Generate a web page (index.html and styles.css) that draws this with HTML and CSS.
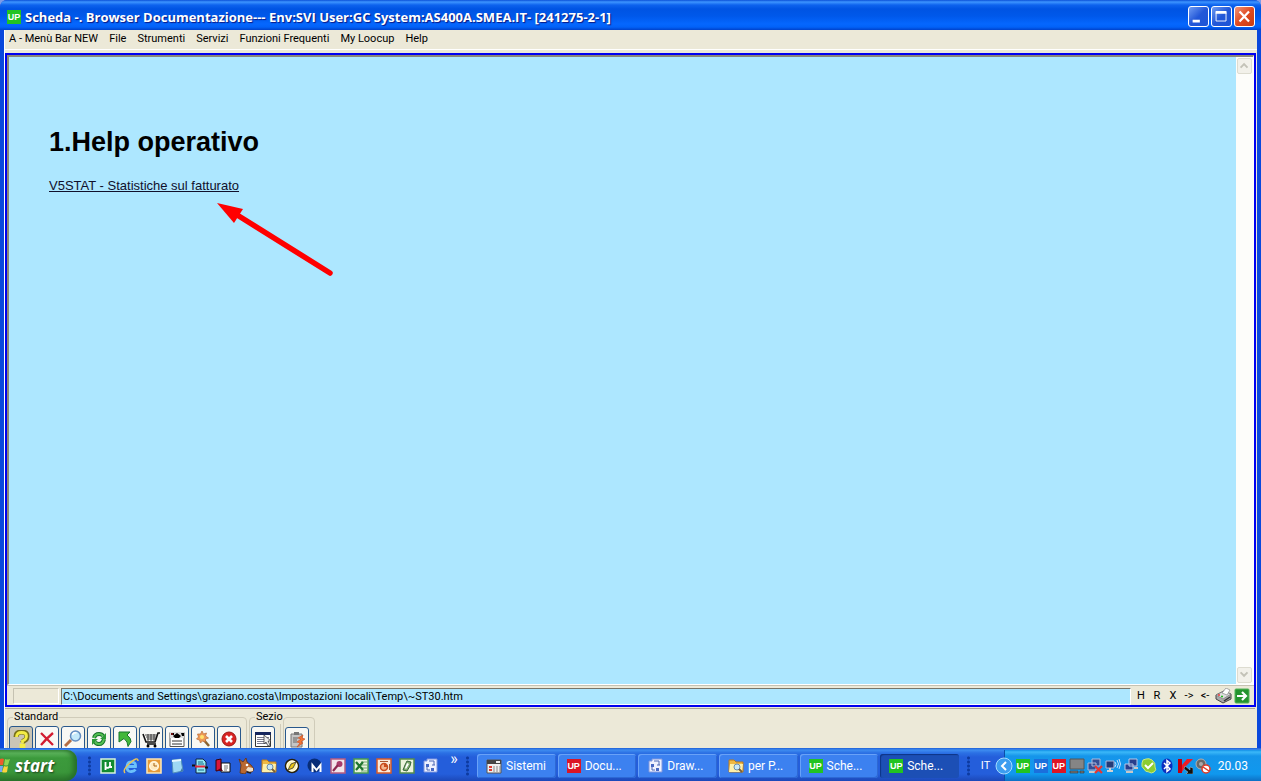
FILE: index.html
```html
<!DOCTYPE html>
<html lang="it">
<head>
<meta charset="utf-8">
<title>Scheda - Browser Documentazione</title>
<link rel="stylesheet" href="styles.css">
</head>
<body>
<div class="window">
  <header class="titlebar">
    <span class="up up-green">UP</span>
    <h1 class="title">Scheda -. Browser Documentazione--- Env:SVI User:GC System:AS400A.SMEA.IT- [241275-2-1]</h1>
    <button class="win-btn" aria-label="Riduci a icona"><svg viewBox="0 0 21 21"><path d="M4 14h8v3H4z" fill="#fff"/></svg></button>
    <button class="win-btn" aria-label="Ingrandisci"><svg viewBox="0 0 21 21"><path d="M4.500 6h11v9.500h-11z" fill="none" stroke="#fff"/><path d="M4 4.500h12v3H4z" fill="#fff"/></svg></button>
    <button class="win-btn win-close" aria-label="Chiudi"><svg viewBox="0 0 21 21"><path d="M5 5l10.500 11M15.500 5L5 16" stroke="#fff" stroke-width="2.500"/></svg></button>
  </header>
  <div class="frame">
    <nav class="menubar">
      <button>A - Menù Bar NEW</button><button>File</button><button>Strumenti</button><button>Servizi</button><button>Funzioni Frequenti</button><button>My Loocup</button><button>Help</button>
    </nav>
    <main class="panel">
      <div class="view">
        <article class="doc">
          <h2>1.Help operativo</h2>
          <a href="#v5stat">V5STAT - Statistiche sul fatturato</a>
          <svg class="arrow" viewBox="0 0 120 78"><path d="M18 12L114 72" stroke="#f00" stroke-width="5.500" stroke-linecap="round"/><path d="M1 2l26 6-9 14z" fill="#f00"/></svg>
        </article>
        <div class="scroll">
          <button class="scroll-btn" aria-label="Su"><svg viewBox="0 0 15 16"><path d="M3 10l4-4 4 4" fill="none" stroke="#c3c2b7" stroke-width="2.200"/></svg></button>
          <button class="scroll-btn" aria-label="Giù"><svg viewBox="0 0 15 16"><path d="M3 5l4 4 4-4" fill="none" stroke="#c3c2b7" stroke-width="2.200"/></svg></button>
        </div>
      </div>
      <div class="status">
        <span class="cell"></span>
        <input class="path" aria-label="Percorso" readonly value="C:\Documents and Settings\graziano.costa\Impostazioni locali\Temp\~ST30.htm">
        <div class="keys"><button>H</button><button>R</button><button>X</button><button>-&gt;</button><button>&lt;-</button></div>
        <button class="key-icon" aria-label="Stampa"><svg viewBox="0 0 17 16"><path d="M1 7l8-4 7 3v5l-8 4-7-4z" fill="#aaa" stroke="#444"/><path d="M1 7l7 4 8-5-7-3z" fill="#ddd" stroke="#777" stroke-width=".7"/><path d="M7 5l4-5 4 2-3 5z" fill="#fff" stroke="#888" stroke-width=".7"/><path d="M3 7h2" stroke="#e33" stroke-width="1.500"/><path d="M6 8.500h2" stroke="#2b2" stroke-width="1.500"/><path d="M9 13l6-4" stroke="#333" stroke-width="1.500"/></svg></button>
        <button class="key-icon" aria-label="Vai"><svg viewBox="0 0 16 16"><rect x="1" y="1" width="14" height="14" rx="1" fill="#24942e" stroke="#55b45a"/><path d="M3 8h8M8 4l4 4-4 4" fill="none" stroke="#fff" stroke-width="2.200"/></svg></button>
      </div>
    </main>
    <section class="toolbar">
      <fieldset class="group wide"><legend>Standard</legend>
        <button class="tool pressed" aria-label="Guida"><svg viewBox="0 0 18 18"><path d="M4 7q0-5 5.500-5t5.500 4-3.500 5l-1 2" fill="none" stroke="#77701a" stroke-width="5"/><path d="M4.500 7q0-4.500 5-4.500t5 3.500-4 5v2M9 15h3v3H9z" fill="none" stroke="#f3ec46" stroke-width="2.800"/></svg></button>
        <button class="tool" aria-label="Elimina"><svg viewBox="0 0 18 18"><path d="M3 3q5 5 12 12M15 3Q9 8 3 15" fill="none" stroke="#d21c30" stroke-width="2.300"/></svg></button>
        <button class="tool" aria-label="Cerca"><svg viewBox="0 0 18 18"><path d="M7 10l-6 6" stroke="#b36d43" stroke-width="3"/><circle cx="11.500" cy="6" r="5" fill="#c4e9fa" stroke="#638cc0" stroke-width="1.500"/><path d="M8.500 5q1-3 4-2" fill="none" stroke="#fff" stroke-width="1.500"/></svg></button>
        <button class="tool" aria-label="Aggiorna"><svg viewBox="0 0 18 18"><path d="M4 8q1-4 5-4 3 0 4 2M14 9q-1 5-5 5-3 0-4-2" fill="none" stroke="#17702b" stroke-width="4"/><path d="M4 8q1-4 5-4 3 0 4 2M14 9q-1 5-5 5-3 0-4-2" fill="none" stroke="#56c252" stroke-width="2"/><path d="M16 3v6h-6zM2 15V9h6z" fill="#2c9b37"/></svg></button>
        <button class="tool" aria-label="Indietro"><svg viewBox="0 0 18 18"><path d="M3 2h11l-3 3q4 3 4 6.500l-3 5q0-5-4-8L3 12z" fill="#42b83a" stroke="#17762c"/></svg></button>
        <button class="tool" aria-label="Carrello"><svg viewBox="0 0 18 18"><path d="M1 4l3 8h9l3-9h2M5 14h9" fill="none" stroke="#111" stroke-width="1.600"/><path d="M3 5h12M4 7h10M5 9h9M6 4v7M9 4v7M12 4v7" stroke="#222" stroke-width=".8"/><circle cx="6" cy="16" r="1.500"/><circle cx="13" cy="16" r="1.500"/></svg></button>
        <button class="tool" aria-label="Scheda"><svg viewBox="0 0 18 18"><path d="M2 2.500h14v14H2z" fill="#fff" stroke="#555"/><path d="M2 2h14v6H2z" fill="#ddd"/><path d="M9 3l4 3-2 2H7L5 6zM3 3h3v2H3zM13 3h3v3h-2z" fill="#000"/><path d="M4 11h10M4 14h10" stroke="#333"/><path d="M3 4h2" stroke="#d22"/></svg></button>
        <button class="tool" aria-label="Configura"><svg viewBox="0 0 18 18"><path d="M9 9l6 7" stroke="#8b6330" stroke-width="2.500"/><path d="M8 1l1.500 3 3-1-1 3 3 2-3 1 0 3-3-1-2 2-1-3-3-1 2-2-1-3 3 0z" fill="#ee9a56" stroke="#b96a35" stroke-width=".7"/><circle cx="8" cy="7" r="2" fill="#ffe36c"/></svg></button>
        <button class="tool" aria-label="Esci"><svg viewBox="0 0 18 18"><circle cx="9" cy="9" r="7" fill="#d92320" stroke="#9c1714"/><path d="M6 6l6 6M12 6l-6 6" stroke="#fff" stroke-width="2.600"/></svg></button>
      </fieldset>
      <fieldset class="group"><legend>Sezio</legend>
        <button class="tool" aria-label="Seleziona"><svg viewBox="0 0 18 18"><path d="M1.500 2.500h15v14h-15z" fill="#fff" stroke="#333"/><path d="M1 2h16v3H1z" fill="#16265d"/><path d="M3 7.500h12M3 9.500h12M3 11.500h12M3 13.500h12" stroke="#7a7a8d"/><path d="M10 5v9l2-2 2 4 2-1-2-4h3z" fill="#eee" stroke="#444" stroke-width=".8"/></svg></button>
      </fieldset>
      <fieldset class="group" aria-label="Appunti">
        <button class="tool" aria-label="Incolla"><svg viewBox="0 0 18 18"><path d="M3 3h11v13H3z" fill="#c5c5c5" stroke="#777"/><path d="M6 1h5v3H6z" fill="#777"/><path d="M5 7h5M5 9h4M5 11h4" stroke="#666"/><path d="M15 4l-5 3 3 1-4 3 3 1-3 4 6-4-2-1 4-3-3-1z" fill="#f37534" stroke="#c84a20" stroke-width=".6"/></svg></button>
      </fieldset>
    </section>
  </div>
</div>
<footer class="taskbar">
  <button class="start"><svg viewBox="0 0 10 20"><path d="M0 3q2-1 4 0L3 9H0z" fill="#ef5a2d"/><path d="M5 3q2 1 5 0L8 9q-2 1-4 0z" fill="#92d552"/><path d="M0 10h3l-1 6H0z" fill="#72a7f5"/><path d="M4 10q2 1 4 0l-1 6q-2 1-5 0z" fill="#fbd33c"/></svg>start</button>
  <span class="grip"></span>
  <nav class="quick">
    <button aria-label="uTorrent"><svg viewBox="0 0 16 16"><path d="M1 1h14v14H1z" fill="#138b30" stroke="#d9f2dc" stroke-width="1.500"/><path d="M5.500 4v8M5.500 9q3 2 4.500-1V4v5h2" fill="none" stroke="#fff" stroke-width="1.800"/></svg></button>
    <button aria-label="Internet Explorer"><svg viewBox="0 0 16 16"><path d="M4 8.500h8.500Q13 4 8.500 4T4 9t4.500 4.500q2.500 0 4-2" fill="none" stroke="#6cc1fb" stroke-width="2.800"/><path d="M2 15Q-1 12 7 5t8-2" fill="none" stroke="#edc454" stroke-width="1.400"/></svg></button>
    <button aria-label="Outlook"><svg viewBox="0 0 16 16"><path d="M1 1h14v14H1z" fill="#e79a37" stroke="#fce4b2" stroke-width="1.600"/><circle cx="8" cy="8" r="4.300" fill="#ffe8bd" stroke="#fff4dc" stroke-width="1.500"/><path d="M8 5v3h3" fill="none" stroke="#a56315"/></svg></button>
    <button aria-label="Blocco note"><svg viewBox="0 0 16 16"><path d="M3 2l9-1 2 12-10 2z" fill="#9ed8f4" stroke="#5390bb"/><path d="M3 2l9-1v2L3 4z" fill="#e8f8ff"/><path d="M11 14l3-1-1-3z" fill="#3c77a6"/></svg></button>
    <button aria-label="Emulatore"><svg viewBox="0 0 16 16"><path d="M4 1h7l3 3v11H4z" fill="#94e9f4" stroke="#102543"/><path d="M6 4h5M6 6h6M6 12h6" stroke="#176b88"/><path d="M0 7.500h3M13 9.500h3" stroke="#111" stroke-width="2"/><path d="M3 8.500h10" stroke="#e4253a" stroke-width="2"/></svg></button>
    <button aria-label="Dizionario"><svg viewBox="0 0 16 16"><path d="M6 5h9v9H6z" fill="#fff" stroke="#111"/><path d="M1 2l5-1v11l-5 1z" fill="#d91639" stroke="#33030d"/><path d="M1 13h7l-2-3" fill="#5d0718"/><path d="M9 8h4M9 10h4M9 12h3" stroke="#777"/></svg></button>
    <button aria-label="eMule"><svg viewBox="0 0 16 16"><path d="M2 15l1-8-2-6 4 3 3-4 1 4 4 3 3 4-2 3-5-1-2 3z" fill="#b96831" stroke="#64310f" stroke-width=".8"/><path d="M10 9l5 1v3l-4 1-3-2z" fill="#efdfc9"/><circle cx="9" cy="7" r="1.300" fill="#fff"/><path d="M9 14l4 1" stroke="#222" stroke-width="1.500"/></svg></button>
    <button aria-label="Esplora"><svg viewBox="0 0 16 16"><path d="M1 2h5l2 2h7v10H1z" fill="#efb944" stroke="#ba7b1d"/><path d="M2 6h13l-1 8H1z" fill="#fff0a9"/><circle cx="9" cy="9" r="3" fill="#c9e9fa" stroke="#6b8dac"/><path d="M11 11l3 3" stroke="#7c6033" stroke-width="2"/></svg></button>
    <button aria-label="Bussola"><svg viewBox="0 0 16 16"><circle cx="8" cy="8" r="6.500" fill="#fff4ac" stroke="#27200d" stroke-width="1.500"/><circle cx="8" cy="8" r="5" fill="none" stroke="#fff"/><path d="M4 12l3-6 5-2-3 6z" fill="#e9c516" stroke="#333" stroke-width=".8"/></svg></button>
    <button aria-label="Media"><svg viewBox="0 0 16 16"><circle cx="7.500" cy="7.500" r="7" fill="#082d77"/><path d="M5.500 14V7l4 5 4-5v7" fill="none" stroke="#fff" stroke-width="2"/></svg></button>
    <button aria-label="Access"><svg viewBox="0 0 16 16"><path d="M1 1h14v14H1z" fill="#f3e4ea" stroke="#b85c80" stroke-width="1.500"/><circle cx="9.500" cy="6" r="3" fill="#a93c6b"/><path d="M8 7l-5 6" stroke="#8d2850" stroke-width="2.200"/></svg></button>
    <button aria-label="Excel"><svg viewBox="0 0 16 16"><path d="M1 1h14v14H1z" fill="#e8f4dc" stroke="#4b9b50" stroke-width="1.500"/><path d="M8 4h6M8 7h6M8 10h6M8 13h6" stroke="#77a879"/><path d="M3 4l7 8M10 4l-7 8" stroke="#217630" stroke-width="2.300"/></svg></button>
    <button aria-label="PowerPoint"><svg viewBox="0 0 16 16"><path d="M1 1h14v14H1z" fill="#faeadb" stroke="#d65b29" stroke-width="1.500"/><circle cx="8" cy="9" r="3.500" fill="#f4b48d" stroke="#c94c1d" stroke-width="1.500"/><path d="M8 9V5.500A3.500 3.500 0 0 1 11.500 9z" fill="#c94c1d"/><path d="M4 3.500h8M13.500 6v6" stroke="#a9552d"/></svg></button>
    <button aria-label="Project"><svg viewBox="0 0 16 16"><path d="M1 1h14v14H1z" fill="#edf4dc" stroke="#568c4c" stroke-width="1.500"/><path d="M8 3l4 1-1 4-3 5-4-1 2-5z" fill="#84ae70" stroke="#37633a"/><path d="M8 5l2 1-3 5-1-1z" fill="#fff"/></svg></button>
    <button aria-label="Visio"><svg viewBox="0 0 16 16"><path d="M2 3h3V1h10v13H2z" fill="#eef1ff" stroke="#7f96de"/><path d="M4 6h3v3H4zM9 10h3v3H9z" fill="#4668c4"/><path d="M7 3h5v4M5 9v3h3M10 7h3" fill="none" stroke="#4d68b4"/></svg></button>
  </nav>
  <button class="more" aria-label="Altro">»</button>
  <span class="grip"></span>
  <div class="tasks">
    <button class="task"><svg viewBox="0 0 16 16"><path d="M1 2h14v13H1z" fill="#eee" stroke="#555"/><path d="M1 2h14v4H1z" fill="#444"/><path d="M10 3h4v2h-4z" fill="#eee"/><path d="M3 9h3M3 12h3" stroke="#df3d30" stroke-width="2"/><path d="M8 8v6M11 8v6M14 8v6" stroke="#888"/></svg>Sistemi</button>
    <button class="task"><span class="up up-red">UP</span>Docu...</button>
    <button class="task"><svg viewBox="0 0 16 16"><path d="M2 3h3V1h10v13H2z" fill="#eef1ff" stroke="#7f96de"/><path d="M4 6h3v3H4zM9 10h3v3H9z" fill="#4668c4"/><path d="M7 3h5v4M5 9v3h3M10 7h3" fill="none" stroke="#4d68b4"/></svg>Draw...</button>
    <button class="task"><svg viewBox="0 0 16 16"><path d="M1 2h5l2 2h7v10H1z" fill="#efb944" stroke="#ba7b1d"/><path d="M2 6h13l-1 8H1z" fill="#fff0a9"/><circle cx="9" cy="9" r="3" fill="#c9e9fa" stroke="#6b8dac"/><path d="M11 11l3 3" stroke="#7c6033" stroke-width="2"/></svg>per P...</button>
    <button class="task"><span class="up up-green">UP</span>Sche...</button>
    <button class="task active"><span class="up up-green">UP</span>Sche...</button>
  </div>
  <span class="grip"></span>
  <span class="lang">IT</span>
  <div class="tray">
    <button class="expand" aria-label="Mostra icone"><svg viewBox="0 0 18 18"><circle cx="9" cy="9" r="8" fill="#3c9df0" stroke="#a5dcff"/><path d="M11 5L7 9l4 4" fill="none" stroke="#fff" stroke-width="2"/></svg></button>
    <span class="up up-green">UP</span>
    <span class="up up-blue">UP</span>
    <span class="up up-red">UP</span>
    <svg viewBox="0 0 16 16"><path d="M1 1h14v10H1z" fill="#858585" stroke="#555"/><path d="M1 13h8v2H1zM11 13h4v2h-4z" fill="#777" stroke="#333" stroke-width=".6"/></svg>
    <svg viewBox="0 0 16 16"><path d="M5 1h8v7H5zM1 5h8v7H1z" fill="#344f95" stroke="#aebbdc"/><path d="M2 14h7" stroke="#c7c7c7" stroke-width="2"/><path d="M8 8l7 7M15 8l-7 7" stroke="#e93530" stroke-width="2.200"/></svg>
    <svg viewBox="0 0 16 16"><path d="M1 3h8v7H1z" fill="#243b78" stroke="#aebbdc"/><path d="M2 13h6M5 10v3" stroke="#d2d2d2" stroke-width="2"/><path d="M10 4q2 2 0 5M12 2q3 4 0 8M14 1q3 5 0 10" fill="none" stroke="#c5e0ff"/></svg>
    <svg viewBox="0 0 16 16"><path d="M6 1h8v7H6zM2 6h8v6H2z" fill="#293f8c" stroke="#b9c8e8"/><path d="M3 14h7M11 10h4" stroke="#c7c7c7" stroke-width="2"/></svg>
    <svg viewBox="0 0 16 16"><path d="M1 5q0-4 4-4 3-1 6 1 4 3 3 7 2 3-1 5-3 2-5 0-4 0-5-3Q0 9 1 5z" fill="#8ccd32" stroke="#c5eb85"/><path d="M4 7l3 3 5-5" fill="none" stroke="#fff" stroke-width="2"/></svg>
    <svg viewBox="0 0 16 16"><ellipse cx="8" cy="8" rx="5.500" ry="7.500" fill="#0b2fc0"/><path d="M5 5l6 6-3 2.500v-11L11 5l-6 6" fill="none" stroke="#fff" stroke-width="1.500"/></svg>
    <svg viewBox="0 0 16 16"><path d="M1 1h4v14H1z" fill="#c4000d"/><path d="M5 7l5-6h6L8 9l-3 5z" fill="#ee1c25"/><path d="M8 8l5 4V9l3 1v6H9l2-2-4-3z" fill="#111" stroke="#ddd" stroke-width=".4"/></svg>
    <svg viewBox="0 0 16 16"><circle cx="6" cy="6" r="5" fill="#696969" stroke="#b2b2b2"/><circle cx="6" cy="6" r="2" fill="#aaa"/><circle cx="11" cy="11" r="4" fill="#fff" stroke="#dd3927" stroke-width="1.500"/><path d="M8 9l6 4" stroke="#dd3927" stroke-width="1.500"/></svg>
    <time class="clock">20.03</time>
  </div>
</footer>
</body>
</html>
```
FILE: styles.css
```css
* { box-sizing: border-box; }
body {
  margin: 0;
  height: 100vh;
  display: flex;
  flex-direction: column;
  overflow: hidden;
  background: #7d9be8;
  font: 11px/14px Roboto, "Noto Sans", sans-serif;
  color: #000;
}
button { font: inherit; color: inherit; border: 0; padding: 0; margin: 0; background: none; }
svg { display: block; }

.window {
  flex: 1;
  min-height: 0;
  display: flex;
  flex-direction: column;
  background: #0a48dc;
  border-radius: 7px 7px 0 0;
  overflow: hidden;
}
.titlebar {
  flex: none;
  height: 30px;
  display: flex;
  align-items: center;
  gap: 2px;
  padding: 3px 6px 0 7px;
  background: linear-gradient(#0b50d8 0, #3d95ff 2px, #0e63ee 5px, #0054e3 9px, #0058ea 16px, #0567fe 24px, #0262f8 27px, #0042cb 30px);
}
.title {
  flex: 1;
  min-width: 0;
  margin: 0 0 0 2px;
  overflow: hidden;
  white-space: nowrap;
  color: #fff;
  font: bold 13px/18px "Open Sans", "Noto Sans", sans-serif;
  text-shadow: 1px 1px 1px #0a1883;
}
.up {
  flex: none;
  width: 14px;
  height: 14px;
  color: #fff;
  font: bold 9px/14px "Liberation Sans", sans-serif;
  text-align: center;
}
.up-green { background: #22c322; }
.up-red { background: #dc1525; }
.up-blue { background: #1b6fdc; }
.win-btn {
  width: 21px;
  height: 21px;
  border: 1px solid #fff;
  border-radius: 3px;
  background: linear-gradient(135deg, #6f9cf3, #2257d8 50%, #1d55d6);
}
.win-close { background: linear-gradient(135deg, #f0957a, #e04a20 50%, #c83c12); }

.frame {
  flex: 1;
  min-height: 0;
  display: flex;
  flex-direction: column;
  margin: 0 4px;
  border-left: 1px solid #fff;
  background: #ece9d8;
}
.menubar {
  flex: none;
  display: flex;
  gap: 11px;
  height: 20px;
  padding: 0 0 1px 4px;
  border-bottom: 1px solid #fff;
}
.panel {
  flex: 1;
  min-height: 0;
  display: flex;
  flex-direction: column;
  margin: 3px 1px 0 0;
  border: 2px solid #0000f0;
}
.view {
  flex: 1;
  min-height: 0;
  display: flex;
  border: 2px solid #8a8778;
  border-width: 2px 1px 1px 2px;
  border-color: #8a8778 #fff #fff #8a8778;
}
.doc {
  flex: 1;
  position: relative;
  padding: 68px 40px;
  background: #ade7ff;
  font: 13px/16px "Liberation Sans", Arial, sans-serif;
}
.doc h2 { margin: 0 0 19px; font-size: 27px; line-height: 34px; }
.doc a { color: #10102c; }
.arrow { position: absolute; left: 207px; top: 144px; width: 120px; height: 78px; }
.scroll {
  width: 17px;
  display: flex;
  flex-direction: column;
  justify-content: space-between;
  padding: 1px;
  background: #fdfdfa;
}
.scroll-btn { height: 16px; border: 1px solid #dddcd0; border-radius: 2px; background: #f2f1ea; }
.status {
  flex: none;
  height: 20px;
  display: flex;
  align-items: center;
  gap: 2px;
  padding: 1px 3px 0 6px;
  border-top: 1px solid #c5c2b2;
}
.cell { width: 46px; height: 16px; border: 1px solid #c5c2b2; border-color: #c5c2b2 #fff #fff #c5c2b2; }
.path {
  flex: 1;
  min-width: 0;
  height: 17px;
  padding: 0 1px;
  border: 1px solid #77756a;
  border-color: #77756a #fff #fff #77756a;
  background: #ade7ff;
  color: #000;
  font: inherit;
}
.keys { display: flex; }
.keys button { width: 16px; }
.key-icon { width: 17px; height: 16px; }
.key-icon svg { height: 16px; }

.toolbar {
  flex: none;
  height: 40px;
  display: flex;
  gap: 2px;
  margin: 1px 2px 0 0;
  padding: 1px 2px 0;
  border-top: 1px solid #aaa797;
  overflow: hidden;
}
.group {
  height: 44px;
  width: 32px;
  min-width: 0;
  display: flex;
  gap: 2px;
  margin: 0;
  padding: 2px 0 0 1px;
  border: 1px solid #d0ccba;
  border-radius: 4px;
}
.group.wide { width: 240px; }
.group legend { padding: 0 1px; margin-left: 4px; height: 14px; line-height: 14px; }
.group:not(:has(legend)) { height: 37px; margin-top: 7px; padding-top: 9px; }
.tool {
  flex: none;
  width: 24px;
  height: 26px;
  display: flex;
  justify-content: center;
  padding-top: 3px;
  border: 1px solid #28588c;
  border-radius: 3px;
  background: #f8f8f4;
}
.tool svg { width: 18px; height: 18px; }
.pressed { background: #c9c5b6; }

.taskbar {
  flex: none;
  height: 33px;
  display: flex;
  align-items: center;
  padding-top: 2px;
  color: #fff;
  background: linear-gradient(#1f5fd8 0, #3e8cf0 2px, #2b70e4 5px, #245edb 9px, #245edb 26px, #1c48b8 33px);
}
.start {
  width: 77px;
  height: 31px;
  align-self: flex-end;
  display: flex;
  align-items: center;
  gap: 5px;
  border-radius: 0 10px 12px 0;
  background: linear-gradient(#4ea14b 0, #5cb55c 3px, #3c9a3c 8px, #3a963a 22px, #2b762b 31px);
  box-shadow: inset -4px 0 5px #27702a;
  font: italic bold 17px/22px "Open Sans", sans-serif;
  text-shadow: 1px 1px 2px #1b431b;
}
.start svg { width: 10px; height: 20px; }
.grip {
  flex: none;
  width: 5px;
  height: 20px;
  margin-left: 10px;
  background: radial-gradient(circle, #0d3aa0 1px, transparent 2px) 0 0 / 5px 4px;
}
.quick { display: flex; gap: 7px; margin-left: 8px; }
.quick svg, .task svg, .tray > svg { width: 16px; height: 16px; }
.more { margin: -14px 0 0 11px; width: 10px; font-size: 16px; }
.more + .grip { margin-left: 6px; }
.tasks { flex: 1; display: flex; gap: 2px; margin-left: 7px; min-width: 0; }
.task {
  flex: 1;
  min-width: 0;
  max-width: 79px;
  height: 24px;
  display: flex;
  align-items: center;
  gap: 4px;
  padding-left: 9px;
  border-radius: 3px;
  background: #3c81f0;
  box-shadow: inset 1px 1px 0 #69a2f8, inset -1px -1px 0 #2d68d4;
  white-space: nowrap;
  font-size: 12px;
}
.active { background: #1c4fb5; box-shadow: inset 1px 1px 1px #0e3485; }
.tasks + .grip { margin-left: 7px; }
.lang { margin-left: 10px; width: 14px; }
.tray {
  height: 31px;
  align-self: flex-end;
  display: flex;
  align-items: center;
  gap: 2px;
  margin-left: 9px;
  padding-right: 13px;
  border-left: 1px solid #0c4fa8;
  background: linear-gradient(#1290e8 0, #3bb8f8 2px, #1595ea 6px, #1098ee 24px, #0d70c4 31px);
}
.tray .up { margin: 0 1px; }
.expand { width: 18px; margin-left: -10px; }
.clock { margin-left: 5px; font-size: 12px; }
```
